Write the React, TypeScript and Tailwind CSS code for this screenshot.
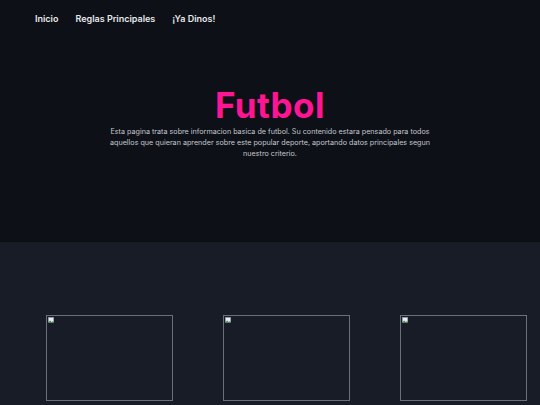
import React from 'react';

const links = ['Inicio', 'Reglas Principales', '¡Ya Dinos!'];

function BrokenImage() {
  return (
    <div className="w-[127px] h-[86px] border border-[#6b7078] relative">
      <svg width="7" height="7" viewBox="0 0 16 16" className="absolute left-[1px] top-[1px]">
        <rect x="1" y="1" width="12" height="11" fill="#e5eef5" stroke="#9aa4ad" />
        <path d="M1 12 L5 8 L9 12 Z" fill="#3f8f3a" />
        <path d="M8 12 L11 9 L14 12 Z" fill="#5aa84c" />
      </svg>
    </div>
  );
}

export default function App() {
  return (
    <div className="w-[540px] h-[405px] overflow-hidden bg-[#171c26] font-['Inter','Open_Sans',sans-serif]">
      {/* cabecera */}
      <div className="h-[242px] bg-[#0d1016] border-b border-[#0a0c10]">
        <nav className="flex gap-[17px] pl-[35px] pt-[12px] text-[9px] font-semibold text-[#e6e8ec]">
          {links.map(l => (
            <span key={l}>{l}</span>
          ))}
        </nav>
        <div className="flex flex-col items-center pt-[58px]">
          <h1 className="text-[35px] font-bold leading-[42px] text-[#ff1493] tracking-[0.5px]">Futbol</h1>
          <p className="w-[330px] text-center text-[7.2px] leading-[11px] text-[#c3c7ce]">
            Esta pagina trata sobre informacion basica de futbol. Su contenido estara pensado para todos aquellos que quieran aprender sobre este popular deporte, aportando datos principales segun nuestro criterio.
          </p>
        </div>
      </div>
      {/* imagenes */}
      <div className="flex gap-[50px] pl-[46px] pt-[73px]">
        <BrokenImage />
        <BrokenImage />
        <BrokenImage />
      </div>
    </div>
  );
}
